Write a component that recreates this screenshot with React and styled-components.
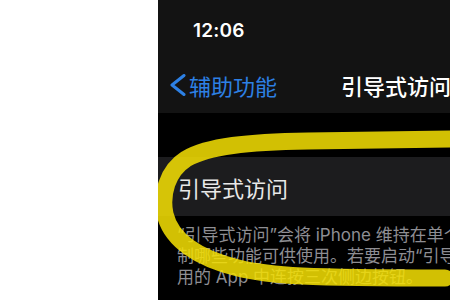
import React from 'react';
import styled, { createGlobalStyle } from 'styled-components';

const GlobalStyle = createGlobalStyle`
  html, body {
    margin: 0;
    padding: 0;
    background: #ffffff;
  }
  body {
    font-family: Inter, 'Noto Sans CJK SC', sans-serif;
  }
`;

const Page = styled.div`
  display: flex;
  width: 450px;
  height: 300px;
  overflow: hidden;
`;

const Margin = styled.div`
  flex: 0 0 158px;
  background: #ffffff;
`;

const Phone = styled.div`
  position: relative;
  flex: 1;
  display: flex;
  flex-direction: column;
  background: #000000;
  overflow: hidden;
`;

const Header = styled.header`
  height: 113px;
  background: #131313;
  display: flex;
  flex-direction: column;
`;

const StatusBar = styled.div`
  height: 60px;
  display: flex;
  align-items: center;
  padding-left: 35px;
  color: #ffffff;
  font-family: Inter, sans-serif;
  font-weight: 600;
  font-size: 19px;
  letter-spacing: 0.2px;
`;

const NavBar = styled.nav`
  height: 50px;
  display: flex;
  align-items: center;
  padding-left: 12px;
  white-space: nowrap;
`;

const Back = styled.div`
  display: flex;
  align-items: center;
  gap: 3px;
  color: #2d80e4;
  font-family: 'Noto Sans CJK SC', sans-serif;
  font-size: 22px;
  flex-shrink: 0;
`;

const Title = styled.div`
  margin-left: 64px;
  flex-shrink: 0;
  color: #ffffff;
  font-family: 'Noto Sans CJK SC', sans-serif;
  font-weight: 500;
  font-size: 22px;
`;

const SectionGap = styled.div`
  height: 44px;
  background: #000000;
`;

const Cell = styled.div`
  height: 59px;
  display: flex;
  align-items: center;
  padding-left: 20px;
  background: #1c1c1e;
  color: #e8e8e8;
  font-family: 'Noto Sans CJK SC', sans-serif;
  font-size: 22px;
  white-space: nowrap;
`;

const Footer = styled.p`
  margin: 0;
  padding: 9px 0 0 19px;
  color: #8e8e93;
  font-family: Inter, 'Noto Sans CJK SC', sans-serif;
  font-size: 17px;
  line-height: 21px;
  white-space: nowrap;
`;

const Marker = styled.svg`
  position: absolute;
  left: 0;
  top: 0;
  width: 292px;
  height: 300px;
  pointer-events: none;
`;

const Chevron = () => (
  <svg width="16" height="22" viewBox="0 0 16 22">
    <polyline
      points="14,1.5 2,11 14,20.5"
      fill="none"
      stroke="#2d80e4"
      strokeWidth="3"
      strokeLinecap="round"
      strokeLinejoin="round"
    />
  </svg>
);

const App = () => (
  <>
    <GlobalStyle />
    <Page>
      <Margin />
      <Phone>
        <Header>
          <StatusBar>12:06</StatusBar>
          <NavBar>
            <Back>
              <Chevron />
              辅助功能
            </Back>
            <Title>引导式访问</Title>
          </NavBar>
        </Header>
        <SectionGap />
        <Cell>引导式访问</Cell>
        <Footer>
          “引导式访问”会将 iPhone 维持在单个 App 中，并允许您控
          <br />
          制哪些功能可供使用。若要启动“引导式访问”，请在想要使
          <br />
          用的 App 中连按三次侧边按钮。
        </Footer>
        <Marker viewBox="0 0 292 300">
          <path
            d="M 300 139 L 150 141 C 90 142, 50 146, 28 159 C 9 171, 3 195, 7 214 C 13 240, 40 258, 80 268 C 112 276, 150 278, 287 278"
            fill="none"
            stroke="#f4e004"
            strokeOpacity="0.86"
            strokeWidth="17"
            strokeLinecap="round"
            strokeLinejoin="round"
          />
        </Marker>
      </Phone>
    </Page>
  </>
);

export default App;
